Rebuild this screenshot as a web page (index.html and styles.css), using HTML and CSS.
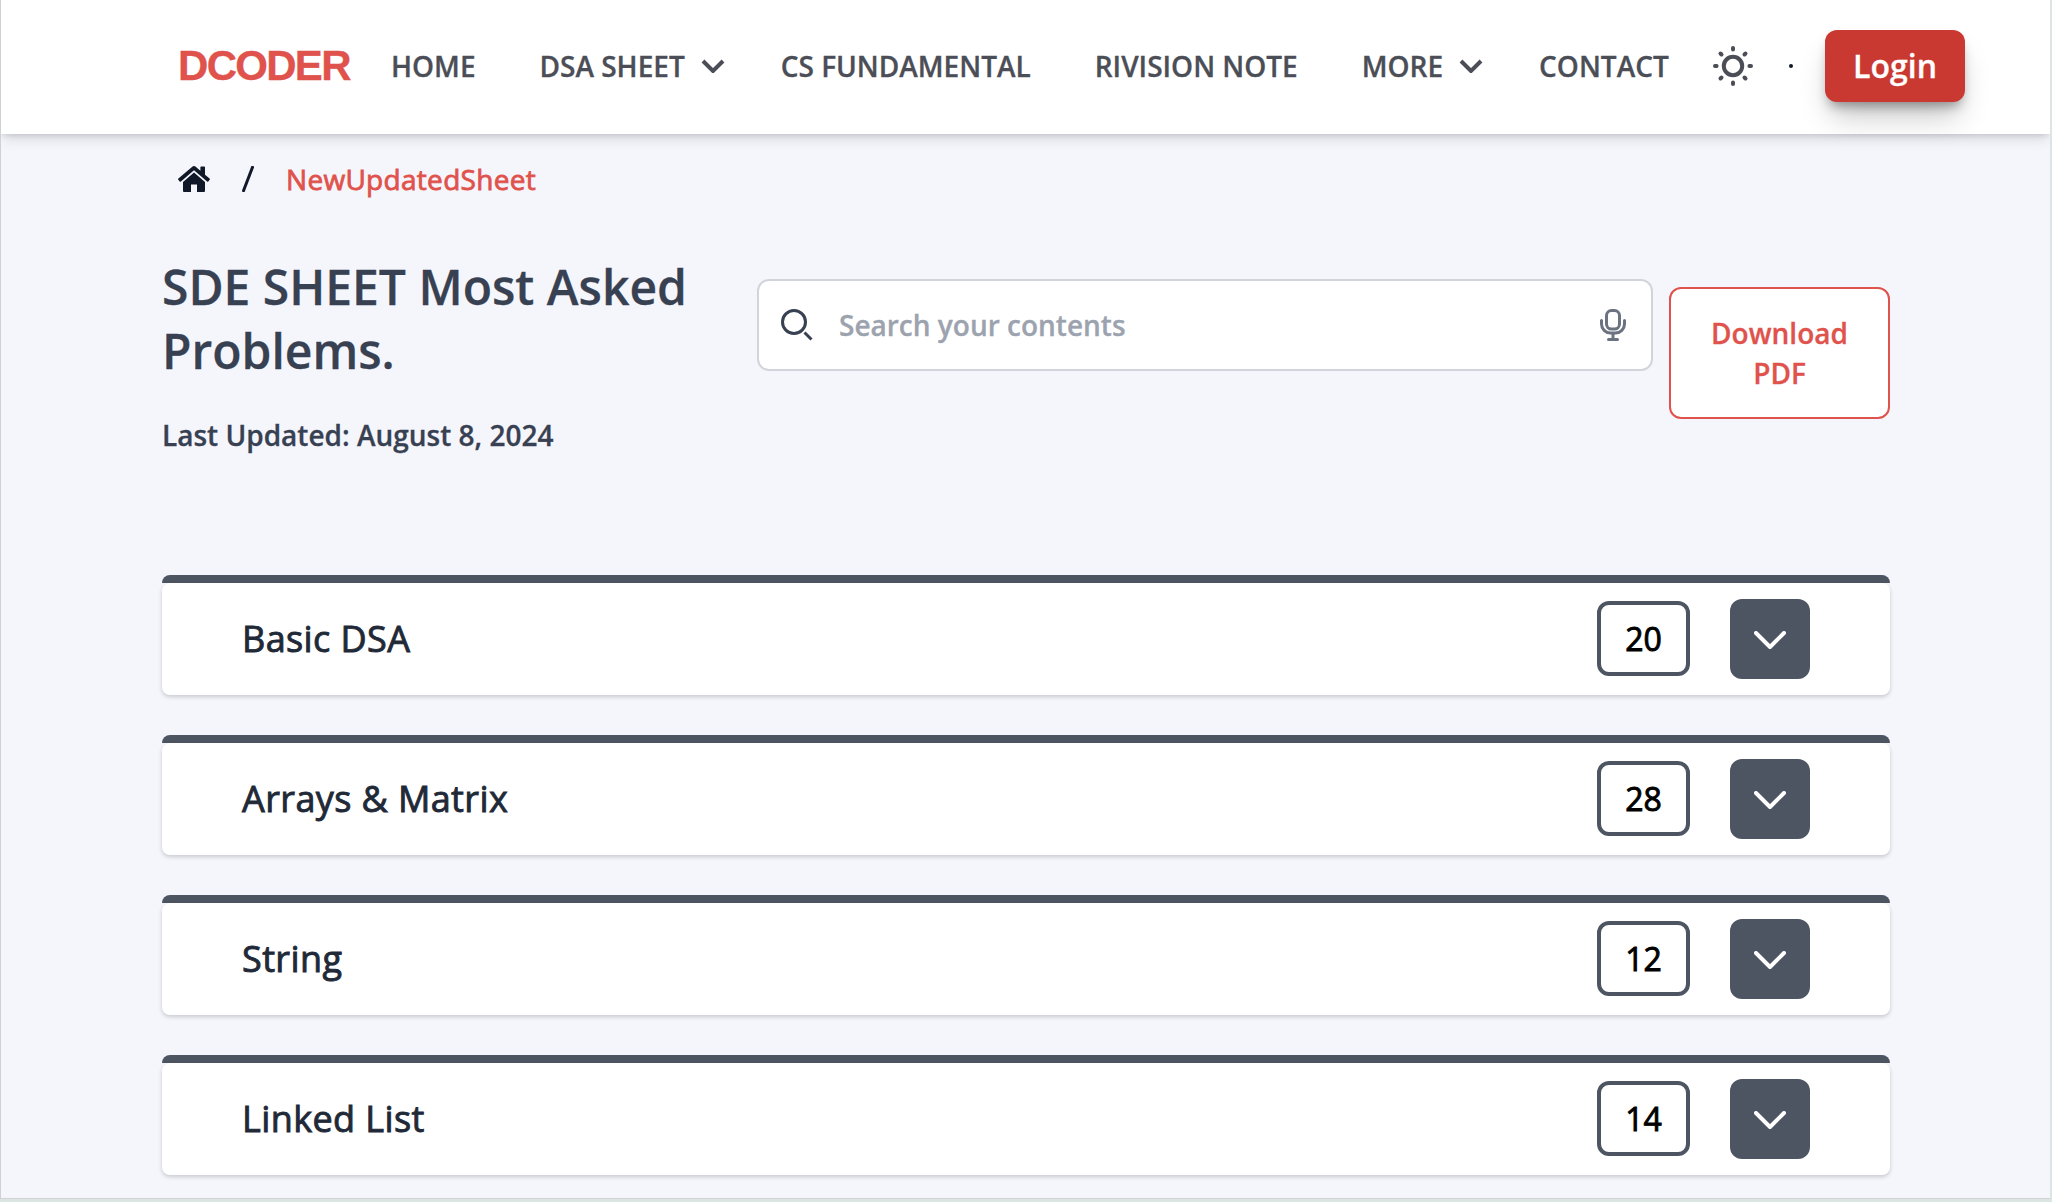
FILE: index.html
```html
<!DOCTYPE html>
<html lang="en">
<head>
<meta charset="utf-8">
<title>DCODER - SDE Sheet</title>
<link rel="stylesheet" href="styles.css">
</head>
<body>
<div class="page">
  <header class="navbar">
    <a class="logo">DCODER</a>
    <nav class="nav">
      <a class="nav-link">HOME</a>
      <a class="nav-link">DSA SHEET <svg class="caret" viewBox="0 0 24 14"><path d="M2 2l10 10L22 2"/></svg></a>
      <a class="nav-link">CS FUNDAMENTAL</a>
      <a class="nav-link">RIVISION NOTE</a>
      <a class="nav-link">MORE <svg class="caret" viewBox="0 0 24 14"><path d="M2 2l10 10L22 2"/></svg></a>
      <a class="nav-link">CONTACT</a>
    </nav>
    <svg class="sun" viewBox="0 0 40 40"><circle cx="20" cy="20" r="9.2"/><path d="M20 2v1.600M20 36.400v1.600M2 20h1.600M36.400 20h1.600M7.500 7.500l1 1M31.500 31.500l1 1M7.500 32.500l1-1M31.500 8.500l1-1"/></svg>
    <span class="dot"></span>
    <button class="login">Login</button>
  </header>

  <div class="breadcrumb">
    <svg class="home" viewBox="0 0 32 26"><path d="M16 6.6L5 16v9a1 1 0 0 0 1 1h7v-7.5h6V26h7a1 1 0 0 0 1-1v-9z"/><path d="M31.6 12.6L27 8.700V1.200a.8.8 0 0 0-.8-.8h-3a.8.8 0 0 0-.8.8v3.600L18 .9a3 3 0 0 0-4 0L.4 12.600a.9.9 0 0 0-.1 1.200l1.400 1.600a.9.9 0 0 0 1.200.1L16 4.300l13.100 11.200a.9.9 0 0 0 1.200-.1l1.400-1.600a.9.9 0 0 0-.1-1.200z"/></svg>
    <svg class="slash" viewBox="0 0 12 26"><path d="M11 0L1 26"/></svg>
    <span class="crumb">NewUpdatedSheet</span>
  </div>

  <section class="intro">
    <div class="heading">
      <h1 class="title">SDE SHEET Most Asked Problems.</h1>
      <p class="updated">Last Updated: August 8, 2024</p>
    </div>
    <div class="search">
      <svg class="lens" viewBox="0 0 32 32"><circle cx="13" cy="13" r="11.5"/><path d="M23.500 23.500l7 7"/></svg>
      <span class="placeholder">Search your contents</span>
      <svg class="mic" viewBox="0 0 26 32"><rect x="6.5" y="1.5" width="13" height="18.6" rx="5"/><path d="M1.5 11.5v3.500a9 9 0 0 0 9 9h5a9 9 0 0 0 9-9v-3.500M13 24v6M8.500 30.500h9"/></svg>
    </div>
    <button class="download">Download PDF</button>
  </section>

  <main class="topics">
    <div class="topic"><div class="topic-body"><span class="topic-name">Basic DSA</span><span class="count">20</span><button class="toggle"><svg class="chevron" viewBox="0 0 32 18"><path d="M2 2l14 14L30 2"/></svg></button></div></div>
    <div class="topic"><div class="topic-body"><span class="topic-name">Arrays &amp; Matrix</span><span class="count">28</span><button class="toggle"><svg class="chevron" viewBox="0 0 32 18"><path d="M2 2l14 14L30 2"/></svg></button></div></div>
    <div class="topic"><div class="topic-body"><span class="topic-name">String</span><span class="count">12</span><button class="toggle"><svg class="chevron" viewBox="0 0 32 18"><path d="M2 2l14 14L30 2"/></svg></button></div></div>
    <div class="topic"><div class="topic-body"><span class="topic-name">Linked List</span><span class="count">14</span><button class="toggle"><svg class="chevron" viewBox="0 0 32 18"><path d="M2 2l14 14L30 2"/></svg></button></div></div>
  </main>
</div>
</body>
</html>
```
FILE: styles.css
```css
* { box-sizing: border-box; margin: 0; }
body {
  height: 1202px;
  padding: 0 2px 3px 0;
  background: #dbe6e2;
  font-family: "Open Sans", sans-serif;
  -webkit-text-stroke: .3px currentColor;
  overflow: hidden;
}
svg { display: block; flex: none; fill: none; stroke: currentColor; }
button { border: 0; font-family: inherit; -webkit-text-stroke: .3px currentColor; }
.page {
  height: 1199px;
  border-left: 1px solid #d0d1d4;
  border-bottom: 1px solid #d0d2d4;
  background: #f5f6fc;
  overflow: hidden;
}
.navbar {
  display: flex;
  align-items: center;
  height: 134px;
  padding: 0 0 2px 177px;
  background: #fff;
  box-shadow: 0 8px 12px -2px rgba(0,0,0,.1), 0 4px 8px -4px rgba(0,0,0,.1), 0 2px 4px rgba(0,0,0,.05);
}
.logo {
  width: 213px;
  font: bold 42px/56px "Liberation Sans", Arial, sans-serif;
  letter-spacing: -1.7px;
  color: #e0524c;
}
.nav { display: flex; gap: 64px; width: 1322px; }
.nav-link {
  display: flex;
  align-items: center;
  font-size: 28px;
  line-height: 40px;
  font-weight: 600;
  color: #4b4e57;
  white-space: nowrap;
}
.caret { width: 24px; height: 14px; margin: 0 -8px 0 16px; stroke-width: 4; }
.sun { width: 40px; height: 40px; color: #4b4e57; stroke-width: 4; stroke-linecap: round; }
.dot { width: 4px; height: 4px; margin: 0 32px 0 36px; border-radius: 2px; background: #111827; }
.login {
  width: 140px;
  height: 72px;
  border-radius: 12px;
  background: #c93931;
  color: #fff;
  font-size: 32px;
  line-height: 48px;
  font-weight: 600;
  box-shadow: 0 20px 30px -6px rgba(0,0,0,.22), 0 8px 12px -4px rgba(0,0,0,.35);
}
.breadcrumb { display: flex; align-items: center; height: 92px; padding: 0 0 2px 177px; color: #111827; }
.home { width: 32px; height: 26px; fill: currentColor; stroke: none; }
.slash { width: 12px; height: 26px; margin: 0 32px; stroke-width: 3; }
.crumb {
  font-size: 28px;
  line-height: 40px;
  letter-spacing: .3px;
  -webkit-text-stroke-width: .8px;
  color: #e0524c;
}
.intro { display: flex; align-items: flex-start; height: 349px; padding: 29px 0 0 161px; }
.heading { width: 595px; }
.title { width: 540px; font-size: 48px; line-height: 64px; font-weight: 600; color: #384152; }
.updated { margin-top: 32px; font-size: 28px; line-height: 40px; font-weight: 600; color: #384152; }
.search {
  display: flex;
  align-items: center;
  width: 896px;
  height: 92px;
  margin: 24px 16px 0 0;
  padding: 0 25px 0 22px;
  border: 2px solid #d1d5db;
  border-radius: 12px;
  background: #fff;
}
.lens { width: 32px; height: 32px; color: #374151; stroke-width: 3; }
.placeholder { flex: 1; margin-left: 26px; font-size: 28px; line-height: 40px; font-weight: 600; color: #9ca3af; }
.mic { width: 26px; height: 32px; color: #6b7280; stroke-width: 3; stroke-linecap: round; }
.download {
  width: 221px;
  height: 132px;
  margin-top: 32px;
  padding: 0 40px;
  border: 2px solid #e0524c;
  border-radius: 12px;
  background: #fff;
  color: #e0524c;
  font-size: 28px;
  line-height: 40px;
  font-weight: 600;
}
.topics { display: grid; gap: 40px; width: 1728px; margin-left: 161px; }
.topic { border-radius: 8px; height: 120px; border-top: 8px solid #4d5562; }
.topic-body {
  display: flex;
  align-items: center;
  height: 112px;
  padding: 0 80px;
  border-radius: 8px;
  background: #fff;
  box-shadow: 0 2px 4px rgba(0,0,0,.18);
}
.topic-name {
  flex: 1;
  font-size: 36px;
  line-height: 56px;
  letter-spacing: .4px;
  -webkit-text-stroke-width: .9px;
  color: #1f2937;
}
.count {
  width: 93px;
  height: 75px;
  margin: 0 40px 1px 0;
  border: 4px solid #4d5562;
  border-radius: 12px;
  font-size: 32px;
  line-height: 68px;
  -webkit-text-stroke-width: .9px;
  text-align: center;
  color: #000;
}
.toggle {
  display: grid;
  place-items: center;
  width: 80px;
  height: 80px;
  padding: 2px 0 0;
  border-radius: 12px;
  background: #4d5562;
  color: #fff;
}
.chevron { width: 32px; height: 18px; stroke-width: 4; stroke-linecap: round; stroke-linejoin: round; }
```
